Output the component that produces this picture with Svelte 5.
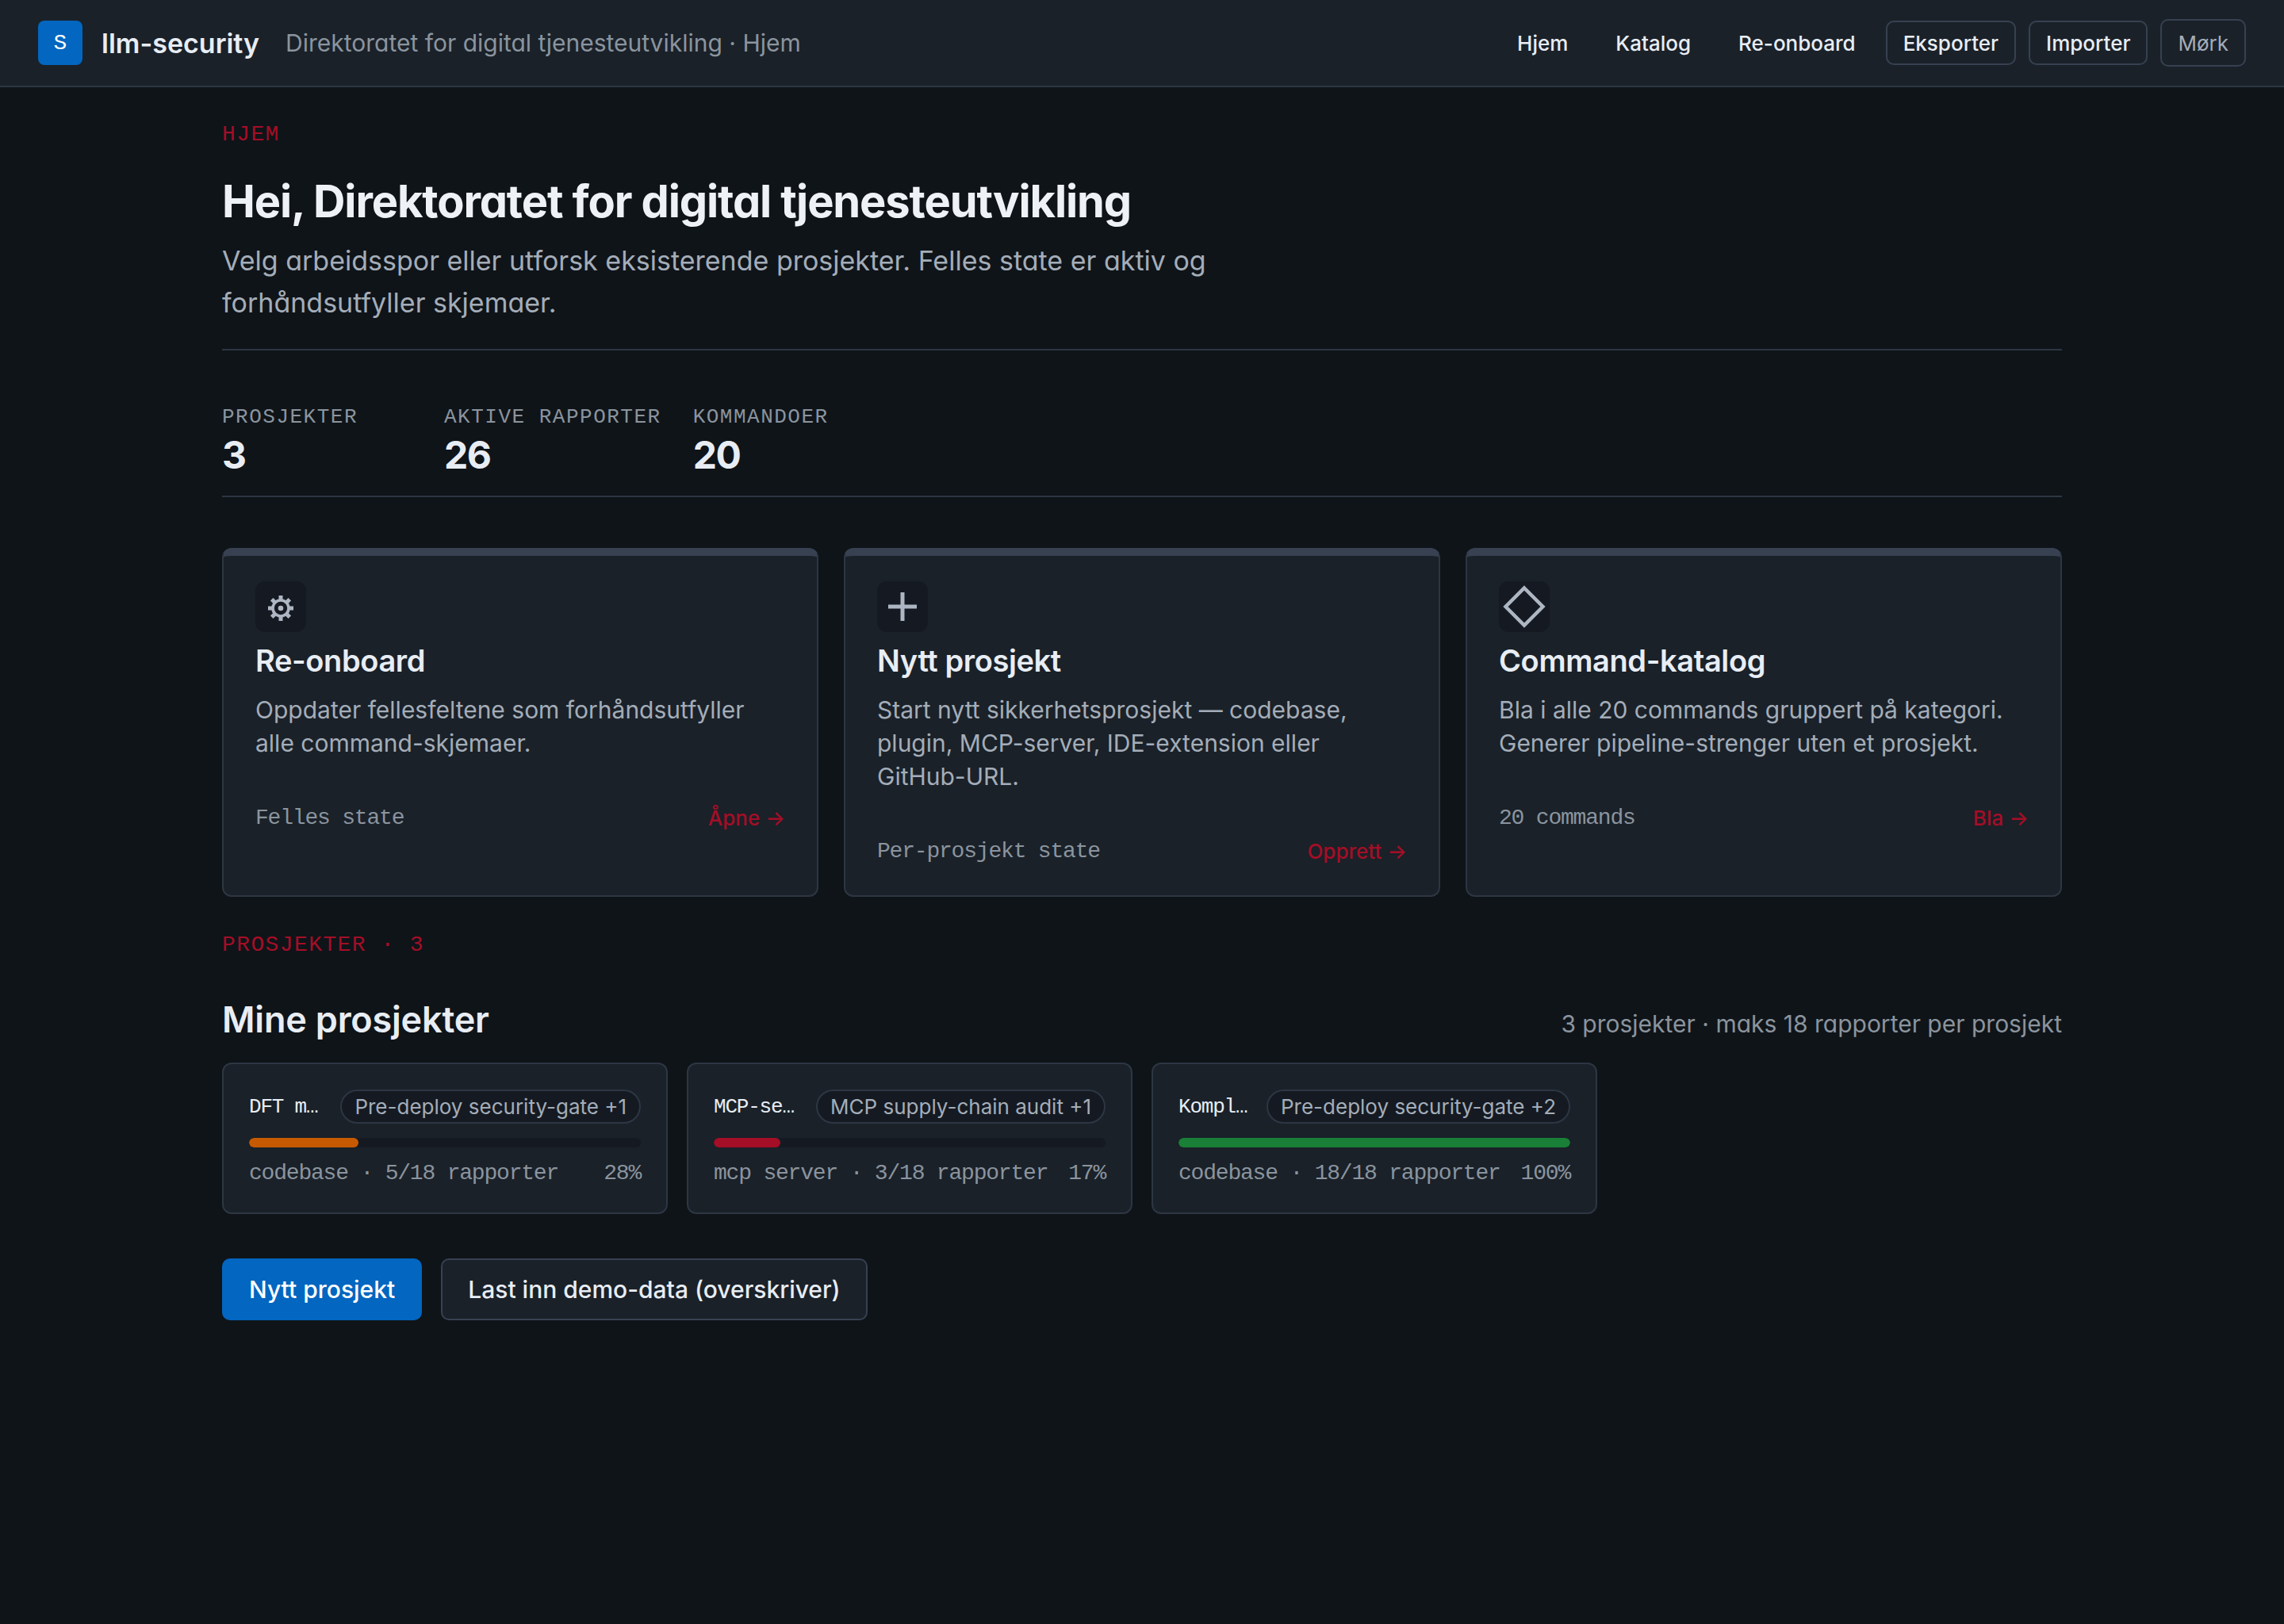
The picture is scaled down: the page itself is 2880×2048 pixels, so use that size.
<script>
  const navLinks = ["Hjem", "Katalog", "Re-onboard"];
  const stats = [
    { label: "PROSJEKTER", value: 3 },
    { label: "AKTIVE RAPPORTER", value: 26 },
    { label: "KOMMANDOER", value: 20 }
  ];
  const tracks = [
    {
      icon: "gear",
      title: "Re-onboard",
      text: "Oppdater fellesfeltene som forhåndsutfyller alle command-skjemaer.",
      note: "Felles state",
      action: "Åpne"
    },
    {
      icon: "plus",
      title: "Nytt prosjekt",
      text: "Start nytt sikkerhetsprosjekt — codebase, plugin, MCP-server, IDE-extension eller GitHub-URL.",
      note: "Per-prosjekt state",
      action: "Opprett"
    },
    {
      icon: "diamond",
      title: "Command-katalog",
      text: "Bla i alle 20 commands gruppert på kategori. Generer pipeline-strenger uten et prosjekt.",
      note: "20 commands",
      action: "Bla"
    }
  ];
  const projects = [
    { name: "DFT mobilapp", chip: "Pre-deploy security-gate +1", kind: "codebase", done: 5, pct: 28, color: "#c75a00" },
    { name: "MCP-server", chip: "MCP supply-chain audit +1", kind: "mcp server", done: 3, pct: 17, color: "#a40e26" },
    { name: "Komplett", chip: "Pre-deploy security-gate +2", kind: "codebase", done: 18, pct: 100, color: "#1a7f37" }
  ];
  const teeth = [0, 45, 90, 135, 180, 225, 270, 315];
</script>

<header class="topbar">
  <div class="logo">S</div>
  <div class="brand">llm-security</div>
  <div class="crumb alt">Direktoratet for digital tjenesteutvikling · Hjem</div>
  <nav class="nav">
    {#each navLinks as link}
      <a class="nav-link" href="#top">{link}</a>
    {/each}
    <button class="nav-btn">Eksporter</button>
    <button class="nav-btn">Importer</button>
    <button class="nav-btn theme">Mørk</button>
  </nav>
</header>

<main class="page">
  <div class="eyebrow">HJEM</div>
  <h1 class="alt">Hei, Direktoratet for digital tjenesteutvikling</h1>
  <p class="lead alt">Velg arbeidsspor eller utforsk eksisterende prosjekter. Felles state er aktiv og forhåndsutfyller skjemaer.</p>

  <div class="stats">
    {#each stats as stat}
      <div class="stat">
        <div class="stat-label">{stat.label}</div>
        <div class="stat-value alt">{stat.value}</div>
      </div>
    {/each}
  </div>

  <div class="tracks">
    {#each tracks as track}
      <article class="track">
        <div class="track-icon">
          {#if track.icon === "gear"}
            <svg class="gear" width="34" height="34" viewBox="0 0 34 34">
              {#each teeth as angle}
                <rect x="14.5" y="1" width="5" height="7" fill="#adb6c2" transform="rotate({angle} 17 17)" />
              {/each}
              <circle cx="17" cy="17" r="10" fill="none" stroke="#adb6c2" stroke-width="3.6" />
              <circle cx="17" cy="17" r="3.3" fill="#adb6c2" />
            </svg>
          {:else if track.icon === "plus"}
            <svg width="36" height="36" viewBox="0 0 36 36">
              <path d="M18 0V36M0 18H36" fill="none" stroke="#adb6c2" stroke-width="5" />
            </svg>
          {:else}
            <svg class="diamond" width="54" height="54" viewBox="0 0 54 54">
              <path d="M27 3.5L50.5 27L27 50.5L3.5 27Z" fill="none" stroke="#adb6c2" stroke-width="4.5" />
            </svg>
          {/if}
        </div>
        <h3>{track.title}</h3>
        <p>{track.text}</p>
        <div class="track-foot">
          <span class="note">{track.note}</span>
          <span class="action">{track.action} →</span>
        </div>
      </article>
    {/each}
  </div>

  <div class="eyebrow second">PROSJEKTER · 3</div>
  <div class="section-head">
    <h2>Mine prosjekter</h2>
    <span class="section-note alt">3 prosjekter · maks 18 rapporter per prosjekt</span>
  </div>

  <div class="projects">
    {#each projects as project}
      <article class="project">
        <div class="project-top">
          <span class="project-name">{project.name}</span>
          <span class="chip">{project.chip}</span>
        </div>
        <div class="bar"><div class="bar-fill" style="width: {project.pct}%; background: {project.color}"></div></div>
        <div class="project-meta">
          <span>{project.kind} · {project.done}/18 rapporter</span>
          <span>{project.pct}%</span>
        </div>
      </article>
    {/each}
  </div>

  <div class="actions">
    <button class="btn primary">Nytt prosjekt</button>
    <button class="btn">Last inn demo-data (overskriver)</button>
  </div>
</main>

<style>
  :global(body) {
    background: #0f1419;
    color: #e8edf4;
    font-family: Inter, "Noto Sans", sans-serif;
  }

  .alt {
    font-feature-settings: "cv11" 1;
  }

  .topbar {
    display: flex;
    align-items: center;
    height: 108px;
    padding: 0 48px;
    background: #1a2129;
    border-bottom: 2px solid #2d3642;
  }

  .logo {
    display: flex;
    align-items: center;
    justify-content: center;
    width: 56px;
    height: 56px;
    margin-right: 24px;
    border-radius: 8px;
    background: #0366c0;
    color: #fff;
    font-family: "Liberation Mono", monospace;
    font-size: 28px;
  }

  .brand {
    font-size: 34px;
    font-weight: 600;
    margin-right: 33px;
  }

  .crumb {
    font-size: 30px;
    color: #8b949e;
  }

  .nav {
    display: flex;
    align-items: center;
    gap: 16px;
    margin-left: auto;
  }

  .nav-link {
    padding: 0 20px;
    border: 2px solid transparent;
    color: #e8edf4;
    font-size: 26px;
    font-weight: 500;
    text-decoration: none;
  }

  .nav-btn {
    height: 56px;
    padding: 0 20px;
    border: 2px solid #374151;
    border-radius: 10px;
    background: transparent;
    color: #e8edf4;
    font-family: inherit;
    font-size: 26px;
    font-weight: 500;
  }

  .theme {
    height: 60px;
    color: #a4adb8;
    font-weight: 400;
  }

  .page {
    width: 2320px;
    margin: 0 auto;
    padding: 44px 0 0;
  }

  .eyebrow {
    color: #a40e26;
    font-family: "Liberation Mono", monospace;
    font-size: 28px;
    line-height: 32px;
    letter-spacing: 1.4px;
  }

  .eyebrow.second {
    margin-top: 45px;
  }

  h1 {
    margin: 34px 0 0;
    font-size: 56px;
    font-weight: 700;
    line-height: 68px;
    letter-spacing: -0.02em;
    color: #eef2f7;
  }

  .lead {
    max-width: 1280px;
    margin: 14px 0 0;
    padding: 0;
    font-size: 34px;
    line-height: 53px;
    color: #a4adb8;
  }

  .stats {
    display: flex;
    gap: 40px;
    margin-top: 32px;
    padding: 68px 0 21px;
    border-top: 2px solid #2d3642;
    border-bottom: 2px solid #2d3642;
  }

  .stat {
    min-width: 240px;
  }

  .stat-label {
    color: #8b949e;
    font-family: "Liberation Mono", monospace;
    font-size: 26px;
    line-height: 32px;
    letter-spacing: 1.5px;
  }

  .stat-value {
    margin-top: 2px;
    font-size: 48px;
    font-weight: 700;
    line-height: 60px;
    letter-spacing: -0.03em;
  }

  .tracks {
    display: grid;
    grid-template-columns: repeat(3, minmax(0, 1fr));
    gap: 32px;
    margin-top: 64px;
  }

  .track {
    padding: 32px 40px 39px;
    border: 2px solid #2d3642;
    border-top: 10px solid #374151;
    border-radius: 12px;
    background: #1a2129;
  }

  .track-icon {
    display: flex;
    align-items: center;
    justify-content: center;
    width: 64px;
    height: 64px;
    border-radius: 12px;
    background: #151a22;
  }

  .gear {
    margin-top: 4px;
  }

  h3 {
    margin: 11px 0 0;
    font-size: 38px;
    font-weight: 600;
    line-height: 50px;
    letter-spacing: -0.01em;
  }

  .track p {
    margin: 16px 0 0;
    font-size: 30px;
    line-height: 42px;
    color: #a4adb8;
  }

  .track-foot {
    display: flex;
    align-items: center;
    justify-content: space-between;
    margin-top: 58px;
    line-height: 32px;
  }

  .note {
    color: #8b949e;
    font-family: "Liberation Mono", monospace;
    font-size: 28px;
    letter-spacing: -1.2px;
  }

  .action {
    color: #a40e26;
    font-size: 26px;
    font-weight: 500;
    line-height: 30px;
  }

  .section-head {
    display: flex;
    align-items: baseline;
    justify-content: space-between;
    margin-top: 48px;
  }

  h2 {
    margin: 0;
    font-size: 45px;
    font-weight: 600;
    line-height: 60px;
    letter-spacing: -0.2px;
  }

  .section-note {
    color: #8b949e;
    font-size: 30px;
  }

  .projects {
    display: grid;
    grid-template-columns: repeat(4, minmax(0, 1fr));
    gap: 24px;
    margin-top: 24px;
  }

  .project {
    padding: 32px;
    border: 2px solid #2d3642;
    border-radius: 12px;
    background: #1a2129;
  }

  .project-top {
    display: flex;
    align-items: center;
    gap: 22px;
  }

  .project-name {
    flex: 1;
    min-width: 0;
    overflow: hidden;
    font-family: "Liberation Mono", monospace;
    font-size: 26px;
    letter-spacing: -1.2px;
    text-overflow: ellipsis;
    white-space: nowrap;
  }

  .chip {
    flex: none;
    padding: 0 16px;
    border: 2px solid #2d3642;
    border-radius: 999px;
    background: #151a22;
    color: #a4adb8;
    font-size: 26px;
    line-height: 39px;
    white-space: nowrap;
  }

  .bar {
    height: 12px;
    margin-top: 18px;
    border-radius: 6px;
    background: #151a22;
    overflow: hidden;
  }

  .bar-fill {
    height: 100%;
    border-radius: 6px;
  }

  .project-meta {
    display: flex;
    justify-content: space-between;
    margin-top: 15px;
    color: #8b949e;
    font-family: "Liberation Mono", monospace;
    font-size: 28px;
    letter-spacing: -1.2px;
    line-height: 35px;
  }

  .actions {
    display: flex;
    gap: 24px;
    margin-top: 56px;
  }

  .btn {
    height: 78px;
    padding: 0 32px;
    border: 2px solid #374151;
    border-radius: 10px;
    background: #1a2129;
    color: #e8edf4;
    font-family: inherit;
    font-size: 30px;
    font-weight: 500;
  }

  .primary {
    border-color: #0366c0;
    background: #0366c0;
    color: #fff;
  }
</style>
